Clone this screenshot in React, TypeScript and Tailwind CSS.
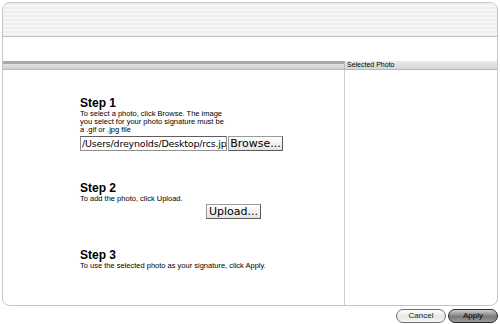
import React from "react";

function PushButton({ label, className }: { label: string; className?: string }) {
  return (
    <div
      className={
        "flex items-center justify-center h-[15px] border border-[#9a9a9a] border-r-[#5a5a5a] border-b-[#5a5a5a] bg-[linear-gradient(#ffffff,#e4e4e4)] text-[11px] leading-none text-black font-['DejaVu_Sans',sans-serif] " +
        (className ?? "")
      }
    >
      {label}
    </div>
  );
}

function AquaButton({ label, dark }: { label: string; dark?: boolean }) {
  return (
    <div
      className={
        "flex items-center justify-center w-[50px] h-[14px] rounded-full border text-[8px] font-['Liberation_Sans',sans-serif] " +
        (dark
          ? "border-[#2a2a2a] bg-[linear-gradient(#cfcfcf,#7a7a7a_55%,#9a9a9a)] text-black"
          : "border-[#6e6e6e] bg-[linear-gradient(#ffffff,#e6e6e6_55%,#f6f6f6)] text-[#222]")
      }
    >
      {label}
    </div>
  );
}

export default function App() {
  return (
    <div className="w-[500px] h-[324px] bg-white font-['Liberation_Sans',sans-serif] text-black pt-[2px] px-[2px]">
      <div className="h-[304px] border border-[#c4c4c4] rounded-[8px] overflow-hidden flex flex-col">
        {/* pinstriped header */}
        <div className="h-[34px] border-b border-[#c2c2c2] bg-[repeating-linear-gradient(180deg,#eeeeee_0px,#eeeeee_2px,#f6f6f6_2px,#f6f6f6_4px)]" />
        <div className="h-[24px] bg-white" />
        {/* column header bar */}
        <div className="h-[9px] flex border-b border-[#b8b8b8]">
          <div className="w-[341px] border-t-[3px] border-[#a8a8a8] bg-[linear-gradient(#e2e2e2,#cfcfcf)]" />
          <div className="flex-1 border-l border-[#b8b8b8] bg-[linear-gradient(#ececec,#d6d6d6)] pl-[2px] text-[7px] leading-[8px] text-black">
            Selected Photo
          </div>
        </div>
        <div className="flex-1 flex">
          <div className="w-[341px] pl-[77px] pt-[27px]">
            <div className="text-[12px] font-bold leading-[12px]">Step 1</div>
            <div className="text-[7.5px] leading-[8px] mt-[1px]">
              To select a photo, click Browse. The image
              <br />
              you select for your photo signature must be
              <br />a .gif or .jpg file
            </div>
            <div className="flex mt-[2px] h-[15px]">
              <input
                readOnly
                value="/Users/dreynolds/Desktop/rcs.jpg"
                className="w-[147px] h-[15px] border border-[#8e8e8e] border-t-[#5e5e5e] bg-white text-[9.5px] tracking-[-0.2px] leading-[13px] pl-[1px] font-['DejaVu_Sans',sans-serif] outline-none"
              />
              <PushButton label="Browse..." className="w-[55px] ml-[1px]" />
            </div>

            <div className="text-[12px] font-bold leading-[12px] mt-[31px]">Step 2</div>
            <div className="text-[7.5px] leading-[8px] mt-[1px]">To add the photo, click Upload.</div>
            <PushButton label="Upload..." className="w-[55px] ml-[126px] mt-[1px]" />

            <div className="text-[12px] font-bold leading-[12px] mt-[30px]">Step 3</div>
            <div className="text-[7.5px] leading-[8px] mt-[1px]">
              To use the selected photo as your signature, click Apply.
            </div>
          </div>
          <div className="flex-1 border-l border-[#cfcfcf]" />
        </div>
      </div>
      <div className="flex justify-end gap-[2px] mt-[3px]">
        <AquaButton label="Cancel" />
        <AquaButton label="Apply" dark />
      </div>
    </div>
  );
}
